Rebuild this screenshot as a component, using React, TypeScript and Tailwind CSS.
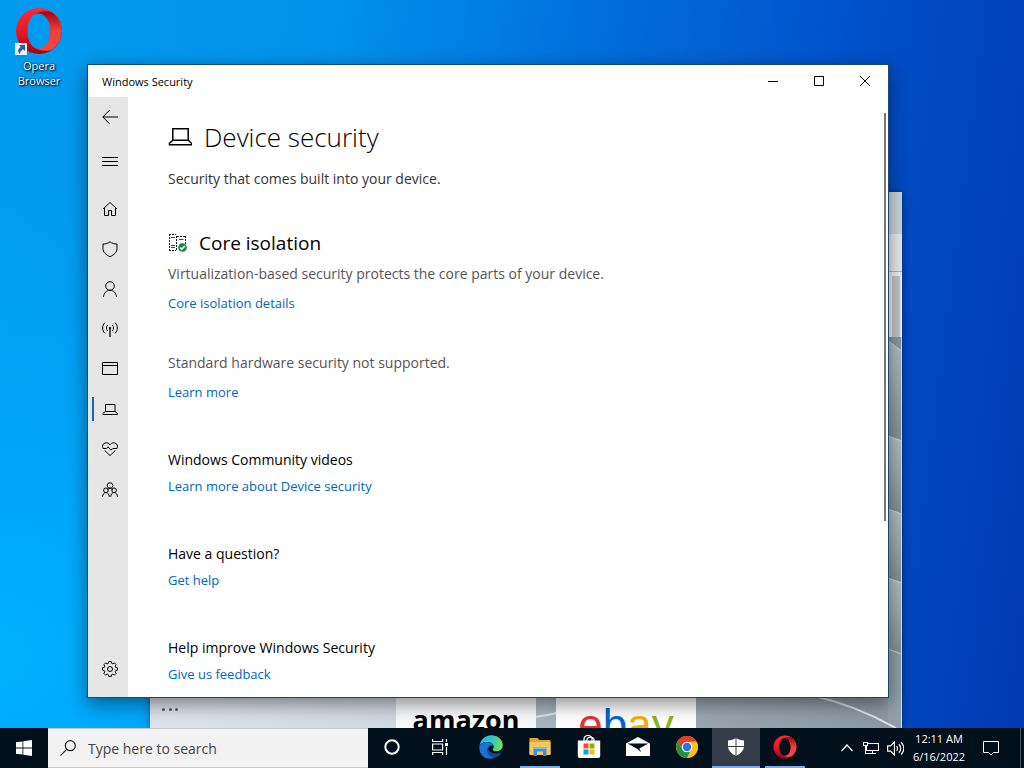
import React, { useState } from 'react';

type IconProps = { children: React.ReactNode; className?: string; box?: number; stroke?: number };

function Glyph({ children, className = 'size-4', box = 16, stroke = 1 }: IconProps) {
  return (
    <svg viewBox={`0 0 ${box} ${box}`} className={className} fill="none" stroke="currentColor" strokeWidth={stroke} aria-hidden="true">
      {children}
    </svg>
  );
}

const laptop = (
  <>
    <path d="M3.500 3.500h9.500v7H3.500z" />
    <path d="M3.500 10.500.8 12.500v1h14.700v-1l-2.500-2" />
  </>
);

const gearPath = (() => {
  const pts: string[] = [];
  for (let i = 0; i < 8; i++) {
    const a = (i * Math.PI) / 4;
    const steps: [number, number][] = [[-0.28, 5.9], [-0.17, 7.5], [0.17, 7.5], [0.28, 5.9]];
    steps.forEach(([d, r]) => {
      pts.push(`${(8 + r * Math.sin(a + d)).toFixed(2)} ${(8 - r * Math.cos(a + d)).toFixed(2)}`);
    });
  }
  return `M${pts.join('L')}Z`;
})();

const navItems: { label: string; icon: React.ReactNode }[] = [
  { label: 'Home', icon: <path d="M1 8 8 1.500 15 8M2.500 7v7.500h4v-5h3v5h4V7" /> },
  { label: 'Virus & threat protection', icon: <path d="M8 .8c2 1.600 4.400 2.200 7 2.200v4.500c0 3.700-2.700 6.200-7 8.200-4.300-2-7-4.500-7-8.200V3C3.600 3 6 2.400 8 .8z" /> },
  { label: 'Account protection', icon: <><circle cx="8" cy="5" r="4.300" /><path d="M1.500 15.800c.4-3.900 3-6.500 6.500-6.500s6.100 2.600 6.500 6.500" /></> },
  { label: 'Firewall & network protection', icon: <><path d="M8 7v9" strokeWidth="1.300" /><circle cx="8" cy="7" r=".8" /><path d="M5.700 10c-1.600-1.700-1.600-4.300 0-6M10.300 10c1.600-1.700 1.600-4.300 0-6M2.900 12.300c-3-3-3-7.600 0-10.600M13.100 12.300c3-3 3-7.600 0-10.600" /></> },
  { label: 'App & browser control', icon: <path d="M.5 1.500h15v12H.5zM.5 4.500h15" /> },
  { label: 'Device security', icon: laptop },
  { label: 'Device performance & health', icon: <><path d="M1.600 8C.1 6.200.3 3.900 1.700 2.700 3.500 1.200 6.500 1.500 8 3.800c1.500-2.300 4.500-2.600 6.300-1.100C15.700 3.900 15.900 6.200 14.400 8" /><path d="M.8 7.500h3.700L6 5.800l3 3.400 1.700-1.700h4.500M2.700 9.500 8 14.600l5.300-5.100" /></> },
  { label: 'Family options', icon: <><circle cx="8" cy="4.500" r="2.800" /><circle cx="3.900" cy="9.300" r="2.300" /><circle cx="12.100" cy="9.300" r="2.300" /><path d="M5.600 9.200c.4-1.200 1.200-1.900 2.400-1.900s2 .7 2.400 1.900M.5 15.800c.2-2.600 1.400-4.200 3.400-4.200s3.200 1.600 3.400 4.200M8.700 15.800c.2-2.600 1.400-4.200 3.400-4.200s3.200 1.600 3.400 4.200" /></> },
];

function OperaLogo({ id, className }: { id: string; className: string }) {
  return (
    <svg viewBox="0 0 48 48" className={className} aria-hidden="true">
      <defs>
        <linearGradient id={`${id}a`} x1="0" y1="0" x2="0" y2="1">
          <stop offset="0" stopColor="#ff2a36" />
          <stop offset=".6" stopColor="#e01522" />
          <stop offset="1" stopColor="#a3000c" />
        </linearGradient>
        <linearGradient id={`${id}b`} x1="0" y1="0" x2="0" y2="1">
          <stop offset="0" stopColor="#a5000d" />
          <stop offset=".5" stopColor="#f0403c" />
          <stop offset="1" stopColor="#f04a42" />
        </linearGradient>
      </defs>
      <path fillRule="evenodd" fill={`url(#${id}a)`} d="M24 1a23 23 0 1 0 0 46 23 23 0 0 0 0-46zm0 5c7 0 11.500 8 11.500 18S31 42 24 42s-11.500-8-11.500-18S17 6 24 6z" />
      <path fill={`url(#${id}b)`} d="M18.500 8C24 4 33 3 38 6a23 23 0 0 1 0 36c-5 3-14 2-19.500-2 9 5.500 17-4 17-16s-8-21.500-17-16z" />
    </svg>
  );
}

function EdgeLogo() {
  return (
    <svg viewBox="0 0 24 24" className="size-6" aria-hidden="true">
      <defs>
        <linearGradient id="edgeTop" x1="0" y1="0" x2="1" y2=".3">
          <stop offset="0" stopColor="#2bb3f0" />
          <stop offset=".6" stopColor="#35c6c0" />
          <stop offset="1" stopColor="#6bdc5a" />
        </linearGradient>
      </defs>
      <path fill="url(#edgeTop)" d="M.5 11C1.300 4.500 6.500.3 12.500.3 19 .3 23.800 5 23.800 10.300c0 3.700-2.800 6-6 6-2.600 0-4.100-.9-4.100-1.800 0-.7 1.100-1 1.100-3 0-2.300-2.500-4.600-6.200-4.600C5 6.900 1.500 8.300.5 11z" />
      <path fill="#1673d2" d="M.4 11.500C1.500 8.300 4.800 6.700 8.300 6.900c3.500.1 6 2 6.400 4.200-2.300-2-6.700.8-5.900 5 .5 3.300 3.600 6.200 7.700 6.300C7.500 26.500-.6 20 .4 11.500z" />
      <path fill="#104b9b" d="M8.800 12.500c-2.500 4.500 1 10 7.700 9.900 2.500-.6 4.500-2.300 5.700-4.300.3-.5 0-.8-.5-.5-5.400 2.400-12 .5-12.900-5.100z" />
    </svg>
  );
}

function ChromeLogo() {
  return (
    <svg viewBox="0 0 24 24" className="size-6" aria-hidden="true">
      <circle cx="12" cy="12" r="11" fill="#fbc116" />
      <path fill="#e33b2e" d="M2.500 6.500A11 11 0 0 1 21.500 6.500L12 7a5 5 0 0 0-4.300 7.500z" />
      <path fill="#229342" d="M2.500 6.500A11 11 0 0 0 12 23l4.300-8.500a5 5 0 0 1-8.600 0z" />
      <path fill="#fbc116" d="M12 7h9.800A11 11 0 0 1 12 23l4.300-8.500A5 5 0 0 0 12 7z" />
      <circle cx="12" cy="12" r="5.300" fill="#fff" />
      <circle cx="12" cy="12" r="4.200" fill="#2a73e8" />
    </svg>
  );
}

function CoreIcon() {
  return (
    <svg viewBox="0 0 20 20" className="size-5" fill="none" stroke="#222" aria-hidden="true">
      <path strokeDasharray="2 1" d="M1 1.500h7M1 17.500h7M1.500 1v17M8.500 3v15M9 3.500h9M17.500 3v8" />
      <path strokeWidth="1.200" stroke="#444" d="M3 4.500h4M11 6.500h4.500M3 12.500h4M3 14.500h4" />
      <circle cx="14.500" cy="14.500" r="4.300" fill="#128a3c" stroke="none" />
      <path stroke="#fff" strokeWidth="1.500" d="m12.300 14.500 1.600 1.600 2.900-3" />
    </svg>
  );
}

function TextLink({ children, className = '' }: { children: React.ReactNode; className?: string }) {
  return (
    <p className={`text-[13px] leading-5 ${className}`}>
      <a href="#" className="text-[#0067b3] hover:text-gray-500">{children}</a>
    </p>
  );
}

function SideButton({ label, active = false, onClick, children }: { label: string; active?: boolean; onClick?: () => void; children: React.ReactNode }) {
  return (
    <button type="button" aria-label={label} onClick={onClick} className="flex h-10 w-full items-center pr-[3px] pl-1 hover:bg-black/5">
      <span className={active ? 'h-6 w-0.5 bg-[#0f6cbd]' : 'h-6 w-0.5'} />
      <span className="flex flex-1 justify-center">{children}</span>
    </button>
  );
}

function SecurityWindow() {
  const [current, setCurrent] = useState('Device security');
  return (
    <section aria-label="Windows Security" className="absolute top-16 left-[87px] flex h-[634px] w-[802px] flex-col border border-[#1c4a66] bg-white text-black shadow-[0_6px_18px_rgba(0,0,0,0.45)]">
      <header className="flex h-8 shrink-0 items-center pl-[14px]">
        <h1 className="flex-1 pt-0.5 text-[11px]">Windows Security</h1>
        <button type="button" aria-label="Minimize" className="flex h-8 w-[46px] items-center justify-center"><Glyph className="size-3" box={12}><path d="M1 6.500h10" /></Glyph></button>
        <button type="button" aria-label="Maximize" className="flex h-8 w-[46px] items-center justify-center"><Glyph className="size-3" box={12}><path d="M1.500 1.500h9v9h-9z" /></Glyph></button>
        <button type="button" aria-label="Close" className="flex h-8 w-[46px] items-center justify-center"><Glyph className="size-3" box={12}><path d="m1 1 10 10M11 1 1 11" /></Glyph></button>
      </header>
      <div className="flex min-h-0 flex-1">
        <nav className="flex w-10 shrink-0 flex-col bg-[#e6e6e6] pb-2">
          <SideButton label="Back"><Glyph><path d="M16 8H.8M7.500 1.200.8 8l6.700 6.800" /></Glyph></SideButton>
          <div className="mt-1 mb-2"><SideButton label="Open navigation"><Glyph><path d="M0 4.500h16M0 8.500h16M0 12.500h16" /></Glyph></SideButton></div>
          {navItems.map((item) => (
            <SideButton key={item.label} label={item.label} active={item.label === current} onClick={() => setCurrent(item.label)}>
              <Glyph>{item.icon}</Glyph>
            </SideButton>
          ))}
          <div className="mt-auto"><SideButton label="Settings"><Glyph><path d={gearPath} /><circle cx="8" cy="8" r="2.500" /></Glyph></SideButton></div>
        </nav>
        <main className="min-w-0 flex-1 overflow-hidden pt-6 pl-10 text-[14px] leading-5">
          <h2 className="flex items-center gap-3 text-[26px] leading-8 font-[350]">
            <svg viewBox="0 0 24 24" className="size-6" fill="none" stroke="currentColor" strokeWidth="1.500" aria-hidden="true">
              <path d="M4.800 3.800h15.400v11.500H4.800zM4.800 15.300 1.500 18.200v1.500h22v-1.500l-3.300-2.900" />
            </svg>
            Device security
          </h2>
          <p className="mt-4 text-[#333]">Security that comes built into your device.</p>
          <h3 className="mt-10 flex items-center gap-[11px] text-[19px] leading-7"><CoreIcon />Core isolation</h3>
          <p className="mt-[7px] text-[#555]">Virtualization-based security protects the core parts of your device.</p>
          <TextLink className="mt-[9px]">Core isolation details</TextLink>
          <p className="mt-10 text-[#555]">Standard hardware security not supported.</p>
          <TextLink className="mt-[9px]">Learn more</TextLink>
          <h4 className="mt-12">Windows Community videos</h4>
          <TextLink className="mt-[6px]">Learn more about Device security</TextLink>
          <h4 className="mt-12">Have a question?</h4>
          <TextLink className="mt-[6px]">Get help</TextLink>
          <h4 className="mt-12">Help improve Windows Security</h4>
          <TextLink className="mt-[6px]">Give us feedback</TextLink>
        </main>
        <div className="mt-4 mr-0.5 h-[408px] w-0.5 shrink-0 bg-[#767676]" />
      </div>
    </section>
  );
}

function BrowserWindow() {
  return (
    <section aria-label="Browser" className="absolute top-48 bottom-0 left-[150px] flex w-[752px] flex-col overflow-hidden bg-[#8e9ba5] shadow-[0_0_8px_rgba(0,0,0,0.4)]">
      <div className="h-[42px] shrink-0 bg-[#ccd5dd]" />
      <div className="h-[38px] shrink-0 border-b border-[#b4b4b4] bg-[#e8e8ee]" />
      <div className="flex h-[65px] shrink-0 justify-end bg-[#f1f1f4] pt-1 pr-0.5"><div className="w-2 bg-[#c4c4c8]" /></div>
      <div className="relative min-h-0 flex-1">
        <svg viewBox="0 0 752 391" preserveAspectRatio="none" className="absolute inset-0 size-full" aria-hidden="true">
          <defs>
            <linearGradient id="page" x1="0" x2="1">
              <stop offset="0" stopColor="#dde4ec" />
              <stop offset=".32" stopColor="#d0d9e2" />
              <stop offset=".55" stopColor="#a4b0ba" />
              <stop offset="1" stopColor="#8a98a2" />
            </linearGradient>
            <linearGradient id="fold" x1="0" y1="0" x2="0" y2="1">
              <stop offset="0" stopColor="#b3bfc7" />
              <stop offset="1" stopColor="#848f97" />
            </linearGradient>
          </defs>
          <path fill="url(#page)" d="M0 0h752v391H0z" />
          <path fill="url(#fold)" d="M738 4 752 14v90l-14-5z" />
          <path fill="url(#fold)" d="m738 99 14 5v73l-14-5z" />
          <path fill="url(#fold)" d="m738 172 14 5v68l-14-5z" />
          <path fill="url(#fold)" d="m738 241 14 5v71l-14-5z" />
          <path fill="#929fa9" d="m738 312 14 5v74h-14z" />
          <path stroke="#cbd5dc" fill="none" d="m738 4 14 10M738 99l14 5M738 172l14 5M738 241l14 5M738 312l14 5" />
          <path stroke="#dbe3ea" strokeWidth="2" fill="none" d="M385 380q15-2 30-6M660 358q45 10 86 33" />
          <path stroke="#d5dadd" d="M751.500 0v391" />
        </svg>
        <div className="absolute inset-x-0 bottom-0 flex h-8 items-start">
          <button type="button" aria-label="More" className="mt-3 ml-3 flex w-4 justify-between">
            <span className="size-[3px] rounded-full bg-[#555b66]" /><span className="size-[3px] rounded-full bg-[#555b66]" /><span className="size-[3px] rounded-full bg-[#555b66]" />
          </button>
          <a href="#" className="ml-[218px] h-8 w-[140px] overflow-hidden bg-[#f8f9fa] pt-2 text-center text-[27px] leading-8 font-bold text-black">amazon</a>
          <a href="#" className="ml-5 h-8 w-[140px] overflow-hidden bg-white pt-[7px] text-center font-['Liberation_Sans',sans-serif] text-[44px] leading-[44px]">
            <span className="text-[#e53238]">e</span><span className="text-[#0064d2]">b</span><span className="text-[#f5af02]">a</span><span className="text-[#86b817]">y</span>
          </a>
        </div>
      </div>
    </section>
  );
}

function TaskButton({ label, wide = false, running = false, active = false, children }: { label: string; wide?: boolean; running?: boolean; active?: boolean; children: React.ReactNode }) {
  return (
    <button type="button" aria-label={label} className={`flex h-10 w-12 shrink-0 flex-col items-center ${active ? 'bg-[#343d47]' : ''}`}>
      <span className="flex flex-1 items-center">{children}</span>
      <span className={`h-0.5 ${wide ? 'w-12' : 'w-10'} ${running ? 'bg-[#76aee8]' : ''}`} />
    </button>
  );
}

function Taskbar() {
  return (
    <footer className="relative flex h-10 shrink-0 items-center bg-[#02101c] text-white">
      <button type="button" aria-label="Start" className="flex h-10 w-12 shrink-0 items-center justify-center">
        <svg viewBox="0 0 16 16" className="size-4" fill="#fff" aria-hidden="true"><path d="M0 2.300 6.500 1.400v6.200H0zM7.300 1.300 16 0v7.600H7.300zM0 8.400h6.500v6.200L0 13.700zM7.300 8.400H16V16l-8.700-1.300z" /></svg>
      </button>
      <label className="flex h-10 w-80 items-center gap-3 border-y border-[#c8c8c8] bg-[#f2f2f2] pl-3 text-[#222]">
        <Glyph className="size-4 shrink-0" stroke={1.2}><circle cx="10.300" cy="5.700" r="5" /><path d="M6.700 9.300.4 15.600" /></Glyph>
        <input aria-label="Search" placeholder="Type here to search" className="min-w-0 flex-1 bg-transparent text-[14px] outline-none placeholder:text-[#444]" />
      </label>
      <TaskButton label="Cortana"><Glyph stroke={2}><circle cx="8" cy="8" r="6.700" /></Glyph></TaskButton>
      <TaskButton label="Task view"><Glyph stroke={1.2}><path d="M.6 0v2.500h10V0M.6 16v-2.500h10V16M.6 5h10v6H.6zM14.500 0v3M14.500 8v8" /><path d="M13 4h3v3h-3z" fill="currentColor" stroke="none" /></Glyph></TaskButton>
      <div className="ml-[3px] flex gap-px">
        <TaskButton label="Edge"><EdgeLogo /></TaskButton>
        <TaskButton label="File Explorer" running>
          <svg viewBox="0 0 24 24" className="size-6" aria-hidden="true"><path fill="#e3a331" d="M1.500 3h8l2 2h11v14h-21z" /><path fill="#f6c75e" d="M1.500 7h21v13h-21z" /><path fill="#3f8fd2" d="M5.500 12.500h13V21h-3.500v-4.500H9V21H5.500z" /><path fill="#7cbef0" d="M5.500 12.500h13v1.500h-13z" /></svg>
        </TaskButton>
        <TaskButton label="Microsoft Store">
          <svg viewBox="0 0 24 24" className="size-6" aria-hidden="true"><path fill="none" stroke="#fff" strokeWidth="1.200" d="M7 6V4a4 3.500 0 0 1 8 0v2M10 6V4a4 3.500 0 0 1 7 0v2" /><path fill="#fff" d="M.8 5.500h22.400V21a2 2 0 0 1-2 2H2.800a2 2 0 0 1-2-2z" /><path fill="#f25022" d="M6.500 8.500h5v5h-5z" /><path fill="#7fba00" d="M12.500 8.500h5v5h-5z" /><path fill="#00a4ef" d="M6.500 14.500h5v5h-5z" /><path fill="#ffb900" d="M12.500 14.500h5v5h-5z" /></svg>
        </TaskButton>
        <TaskButton label="Mail">
          <svg viewBox="0 0 24 24" className="size-6" aria-hidden="true"><path fill="#fff" d="M0 8.500 12 2l12 6.500V21H0z" /><path fill="#02101c" d="M1.500 8.500h20.800l-9 5 2 3.800-3.800-3.300z" /></svg>
        </TaskButton>
        <TaskButton label="Chrome"><ChromeLogo /></TaskButton>
        <TaskButton label="Windows Security" running active wide>
          <svg viewBox="0 0 18 18" className="size-[18px]" aria-hidden="true"><path fill="#fff" d="M9 0c2.200 1.600 5 2.400 8 2.500V8c0 4.500-3.500 7.800-8 10-4.500-2.200-8-5.500-8-10V2.500C4 2.400 6.800 1.600 9 0z" /><path stroke="#343d47" d="M9 0v18M0 8.500h18" /></svg>
        </TaskButton>
        <TaskButton label="Opera" running><OperaLogo id="task" className="size-6" /></TaskButton>
      </div>
      <div className="ml-auto flex h-10 items-center">
        <button type="button" aria-label="Show hidden icons" className="flex w-6 justify-center"><Glyph className="size-3" box={12} stroke={1.2}><path d="m.5 9 5.500-6 5.500 6" /></Glyph></button>
        <button type="button" aria-label="Network" className="flex w-6 justify-center"><Glyph stroke={1.1}><path d="M4.500 3.500h11v7H3.500v-5M.5 2.500h4v3h-4zM2.500 5.500v8h3M9.500 10.500v3M5.500 13.500h7.500" /></Glyph></button>
        <button type="button" aria-label="Volume" className="flex w-6 justify-center"><Glyph stroke={1.1} className="size-[17px]"><path d="M.6 5.500h2.700L7 2v12l-3.700-3.500H.6zM9 5.800c1.100 1.300 1.100 3.100 0 4.400M11.200 4c2.100 2.400 2.100 5.600 0 8M13.300 2.300c3.100 3.500 3.100 7.900 0 11.400" /></Glyph></button>
        <time className="w-[64px] text-center text-[11px] leading-[18px] whitespace-nowrap">12:11 AM<br />6/16/2022</time>
        <button type="button" aria-label="Notifications" className="flex w-10 justify-center"><Glyph><path d="M.5 1.500h15v11h-5L8 15l-2.500-2.500h-5z" /></Glyph></button>
        <span className="ml-[9px] h-10 w-1 border-l border-[#4b5660]" />
      </div>
    </footer>
  );
}

export default function App() {
  return (
    <div className="flex min-h-screen flex-col overflow-hidden bg-[#0050cc] font-['Open_Sans','Noto_Sans',sans-serif]">
      <div className="relative flex-1 bg-[radial-gradient(circle_at_0%_90%,#00b0ff_0%,#00a8fc_12%,transparent_40%),linear-gradient(97deg,#009cf0_0%,#0092ec_30%,#0074de_50%,#0050c8_78%,#003ab2_100%)]">
        <a href="#" className="absolute top-[7px] left-2 flex w-[62px] flex-col items-center gap-[3px] text-center text-[11px] leading-[15px] text-white [text-shadow:1px_1px_2px_#000,0_0_2px_#000]">
          <span className="relative">
            <OperaLogo id="desk" className="size-12" />
            <svg viewBox="0 0 12 12" className="absolute bottom-0 left-0 size-3" aria-hidden="true"><path fill="#eee" d="M0 0h12v12H0z" /><path fill="#2461a8" d="M4 2h6v6L8 6.300C6 7.500 5 9 5 11 2 9 3 5.500 5.800 4z" /></svg>
          </span>
          Opera Browser
        </a>
        <BrowserWindow />
        <SecurityWindow />
      </div>
      <Taskbar />
    </div>
  );
}
